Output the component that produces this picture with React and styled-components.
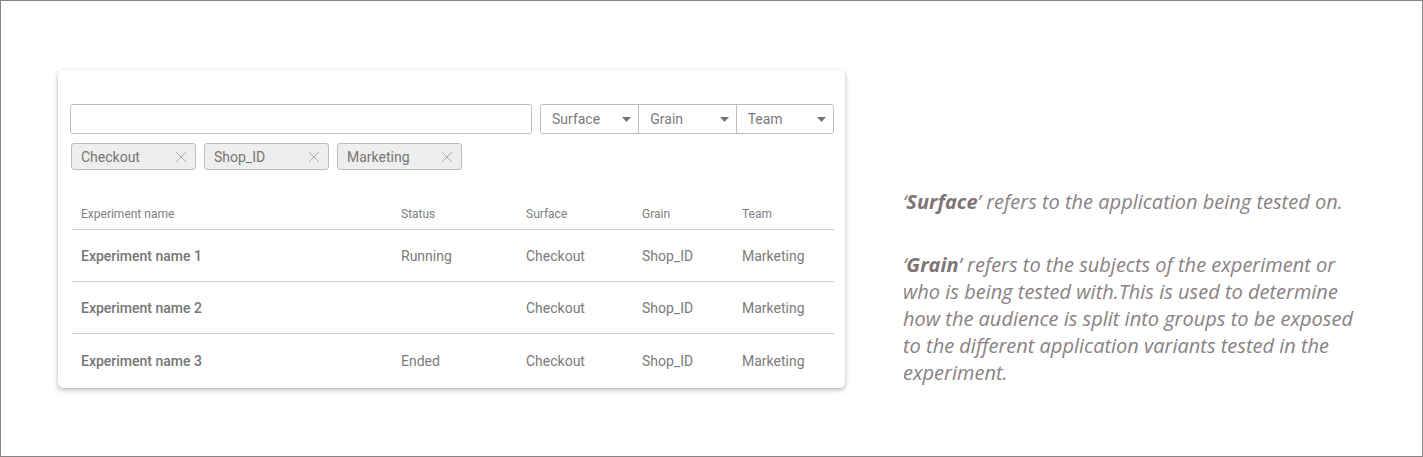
import React from 'react'
import styled, { createGlobalStyle } from 'styled-components';

const GlobalStyle = createGlobalStyle`
    html, body {
        margin: 0;
        padding: 0;
        background: #fff;
    }
    * {
        box-sizing: border-box;
    }
`;

const filters = ['Surface', 'Grain', 'Team'];
const chips = ['Checkout', 'Shop_ID', 'Marketing'];
const columns = ['Experiment name', 'Status', 'Surface', 'Grain', 'Team'];
const rows = [
    { name: 'Experiment name 1', status: 'Running', surface: 'Checkout', grain: 'Shop_ID', team: 'Marketing' },
    { name: 'Experiment name 2', status: '', surface: 'Checkout', grain: 'Shop_ID', team: 'Marketing' },
    { name: 'Experiment name 3', status: 'Ended', surface: 'Checkout', grain: 'Shop_ID', team: 'Marketing' },
];

const Caret = () => (
    <svg width="9" height="5" viewBox="0 0 9 5">
        <path d="M0 0 L9 0 L4.5 5 Z" fill="#757575" />
    </svg>
);

const Cross = () => (
    <svg width="12" height="12" viewBox="0 0 12 12">
        <path d="M1 1 L11 11 M11 1 L1 11" stroke="#a8a8a8" strokeWidth="1" fill="none" />
    </svg>
);

const App = () => {
  return (
    <>
      <GlobalStyle />
      <Page>
        <Card>
            <FilterRow>
                <Search />
                <Selects>
                    {filters.map((f) => (
                        <Select key={f}>
                            <span>{f}</span>
                            <Caret />
                        </Select>
                    ))}
                </Selects>
            </FilterRow>
            <ChipRow>
                {chips.map((c) => (
                    <Chip key={c}>
                        <span>{c}</span>
                        <Cross />
                    </Chip>
                ))}
            </ChipRow>
            <Table>
                <HeadRow>
                    {columns.map((c) => <HeadCell key={c}>{c}</HeadCell>)}
                </HeadRow>
                {rows.map((r, i) => (
                    <Row key={r.name} last={i === rows.length - 1}>
                        <NameCell>{r.name}</NameCell>
                        <Cell>{r.status}</Cell>
                        <Cell>{r.surface}</Cell>
                        <Cell>{r.grain}</Cell>
                        <Cell>{r.team}</Cell>
                    </Row>
                ))}
            </Table>
        </Card>
        <Notes>
            <Note>
                ‘<b>Surface</b>’ refers to the application being tested on.
            </Note>
            <Note>
                ‘<b>Grain</b>’ refers to the subjects of the experiment or who is being tested with.This is used to determine how the audience is split into groups to be exposed to the different application variants tested in the experiment.
            </Note>
        </Notes>
      </Page>
    </>
  )
}

export default App;


const Page = styled.div`
    width: 1423px;
    height: 457px;
    border: 1px solid #8c8385;
    display: flex;
    align-items: flex-start;
    padding: 69px 0 0 57px;
    gap: 58px;
`;

const Card = styled.div`
    width: 787px;
    height: 318px;
    background: #fff;
    border-radius: 5px;
    box-shadow: 0 2px 5px rgba(0, 0, 0, 0.28), 0 0 1px rgba(0, 0, 0, 0.12);
    padding: 34px 11px 0 12px;
    font-family: Roboto, "Liberation Sans", sans-serif;
`;

const FilterRow = styled.div`
    display: flex;
    gap: 8px;
    height: 30px;
`;

const Search = styled.div`
    width: 462px;
    border: 1px solid #bdbdbd;
    border-radius: 3px;
`;

const Selects = styled.div`
    flex: 1;
    display: grid;
    grid-template-columns: repeat(3, 1fr);
    border: 1px solid #bdbdbd;
    border-radius: 3px;
`;

const Select = styled.div`
    display: flex;
    align-items: center;
    justify-content: space-between;
    padding: 0 7px 0 11px;
    font-size: 14px;
    color: #7b7b7b;

    & + & {
        border-left: 1px solid #bdbdbd;
    }
`;

const ChipRow = styled.div`
    display: flex;
    gap: 8px;
    margin-top: 9px;
    padding-left: 1px;
`;

const Chip = styled.div`
    width: 125px;
    height: 27px;
    display: flex;
    align-items: center;
    justify-content: space-between;
    padding: 0 8px 0 9px;
    background: #eeeeee;
    border: 1px solid #bdbdbd;
    border-radius: 3px;
    font-size: 14px;
    color: #757575;
`;

const Table = styled.div`
    margin: 25px 0 0 2px;
`;

const grid = `
    display: grid;
    grid-template-columns: 320px 125px 116px 100px 1fr;
    align-items: center;
`;

const HeadRow = styled.div`
    ${grid}
    height: 35px;
    padding-top: 3px;
    border-bottom: 1px solid #d0d0d0;
`;

const HeadCell = styled.div`
    padding-left: 9px;
    font-size: 12px;
    color: #7e7e7e;
`;

const Row = styled.div`
    ${grid}
    height: 52px;
    padding-top: 1px;
    border-bottom: ${(p) => (p.last ? 'none' : '1px solid #d0d0d0')};
`;

const Cell = styled.div`
    padding-left: 9px;
    font-size: 14px;
    color: #7b7b7b;
`;

const NameCell = styled(Cell)`
    font-weight: 500;
    color: #767676;
`;

const Notes = styled.div`
    width: 470px;
    padding-top: 118px;
    font-family: "Open Sans", sans-serif;
    font-style: italic;
    font-size: 20px;
    line-height: 27px;
    color: #8a8183;

    b {
        font-weight: 700;
        color: #7e7476;
    }
`;

const Note = styled.p`
    margin: 0 0 36px;
`;
